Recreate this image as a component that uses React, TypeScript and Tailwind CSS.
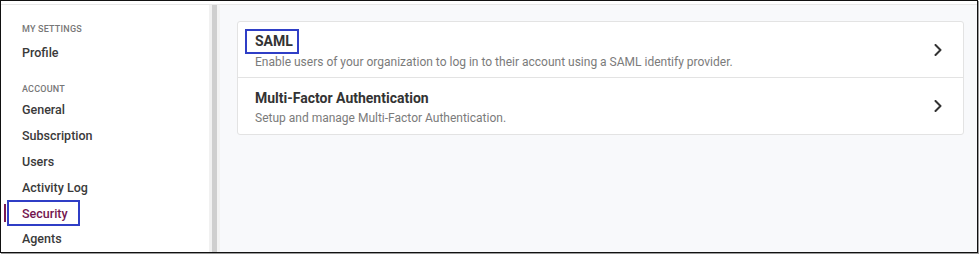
import { ReactNode } from 'react';

const font = { fontFamily: 'Roboto, "Noto Sans", Arial, sans-serif' };

function Chevron() {
  return (
    <svg width="8" height="12" viewBox="0 0 8 12" fill="none" className="shrink-0">
      <path d="M1.5 1 L6.5 6 L1.5 11" stroke="#333" strokeWidth="2" strokeLinecap="round" strokeLinejoin="round" />
    </svg>
  );
}

function NavItem({ label, active }: { label: string; active?: boolean }) {
  return (
    <div className="relative h-[25.8px] flex items-center pl-[21px]">
      {active && (
        <>
          <span className="absolute left-[3px] top-[3px] h-[18px] w-[2px] bg-[#7a1a55]" />
          <span className="absolute left-[6px] top-[-1px] w-[73px] h-[26px] border-2 border-[#2f3ec6]" />
        </>
      )}
      <span className={`text-[12.5px] font-medium ${active ? 'text-[#74154f]' : 'text-[#3a3a3a]'}`}>{label}</span>
    </div>
  );
}

function SectionLabel({ children, className }: { children: ReactNode; className?: string }) {
  return (
    <div className={`pl-[21px] h-[12px] flex items-center text-[9px] font-medium tracking-[0.2px] text-[#777] ${className ?? ''}`}>
      {children}
    </div>
  );
}

function Row({ title, desc, boxed, last }: { title: string; desc: string; boxed?: boolean; last?: boolean }) {
  return (
    <div className={`flex items-center h-[56px] pl-[17px] pr-[21px] ${last ? '' : 'border-b border-[#e3e3e3]'}`}>
      <div className="flex-1 flex flex-col pt-[2px]">
        <div className="h-[20px] flex items-center">
          <span className="relative text-[14px] font-bold text-[#333]">
            {title}
            {boxed && <span className="absolute left-[-10px] right-[-6px] top-[-2px] bottom-[-2px] border-2 border-[#2f3ec6]" />}
          </span>
        </div>
        <div className="h-[16px] mt-[2px] flex items-center text-[12px] text-[#7b7b7b]">{desc}</div>
      </div>
      <Chevron />
    </div>
  );
}

export default function App() {
  return (
    <div className="w-[979px] h-[254px] bg-white" style={font}>
      <div className="w-[978px] h-[253px] border border-[#111] shadow-[1px_1px_0_#9a9a9a] flex flex-col overflow-hidden">
        <div className="h-[4px] bg-white border-b border-[#e8e8e8] shrink-0" />
        <div className="flex-1 flex min-h-0">
          {/* Sidebar */}
          <aside className="w-[208px] bg-white pt-[19px] shrink-0">
            <SectionLabel>MY SETTINGS</SectionLabel>
            <div className="mt-[4px]">
              <NavItem label="Profile" />
            </div>
            <SectionLabel className="mt-[18px]">ACCOUNT</SectionLabel>
            <div className="mt-[2px]">
              <NavItem label="General" />
              <NavItem label="Subscription" />
              <NavItem label="Users" />
              <NavItem label="Activity Log" />
              <NavItem label="Security" active />
              <NavItem label="Agents" />
            </div>
          </aside>
          {/* Scrollbar */}
          <div className="w-[11px] flex shrink-0">
            <div className="w-[3px] bg-[#f1f1f1]" />
            <div className="w-[5px] bg-[#cfcfcf]" />
            <div className="w-[3px] bg-[#f3f3f3]" />
          </div>
          {/* Content */}
          <main className="flex-1 bg-[#f8f9fb] pl-[17px] pr-[13px] pt-[16px]">
            <div className="bg-white border border-[#e3e3e3] rounded-[3px]">
              <Row
                title="SAML"
                desc="Enable users of your organization to log in to their account using a SAML identify provider."
                boxed
              />
              <Row title="Multi-Factor Authentication" desc="Setup and manage Multi-Factor Authentication." last />
            </div>
          </main>
        </div>
      </div>
    </div>
  );
}
